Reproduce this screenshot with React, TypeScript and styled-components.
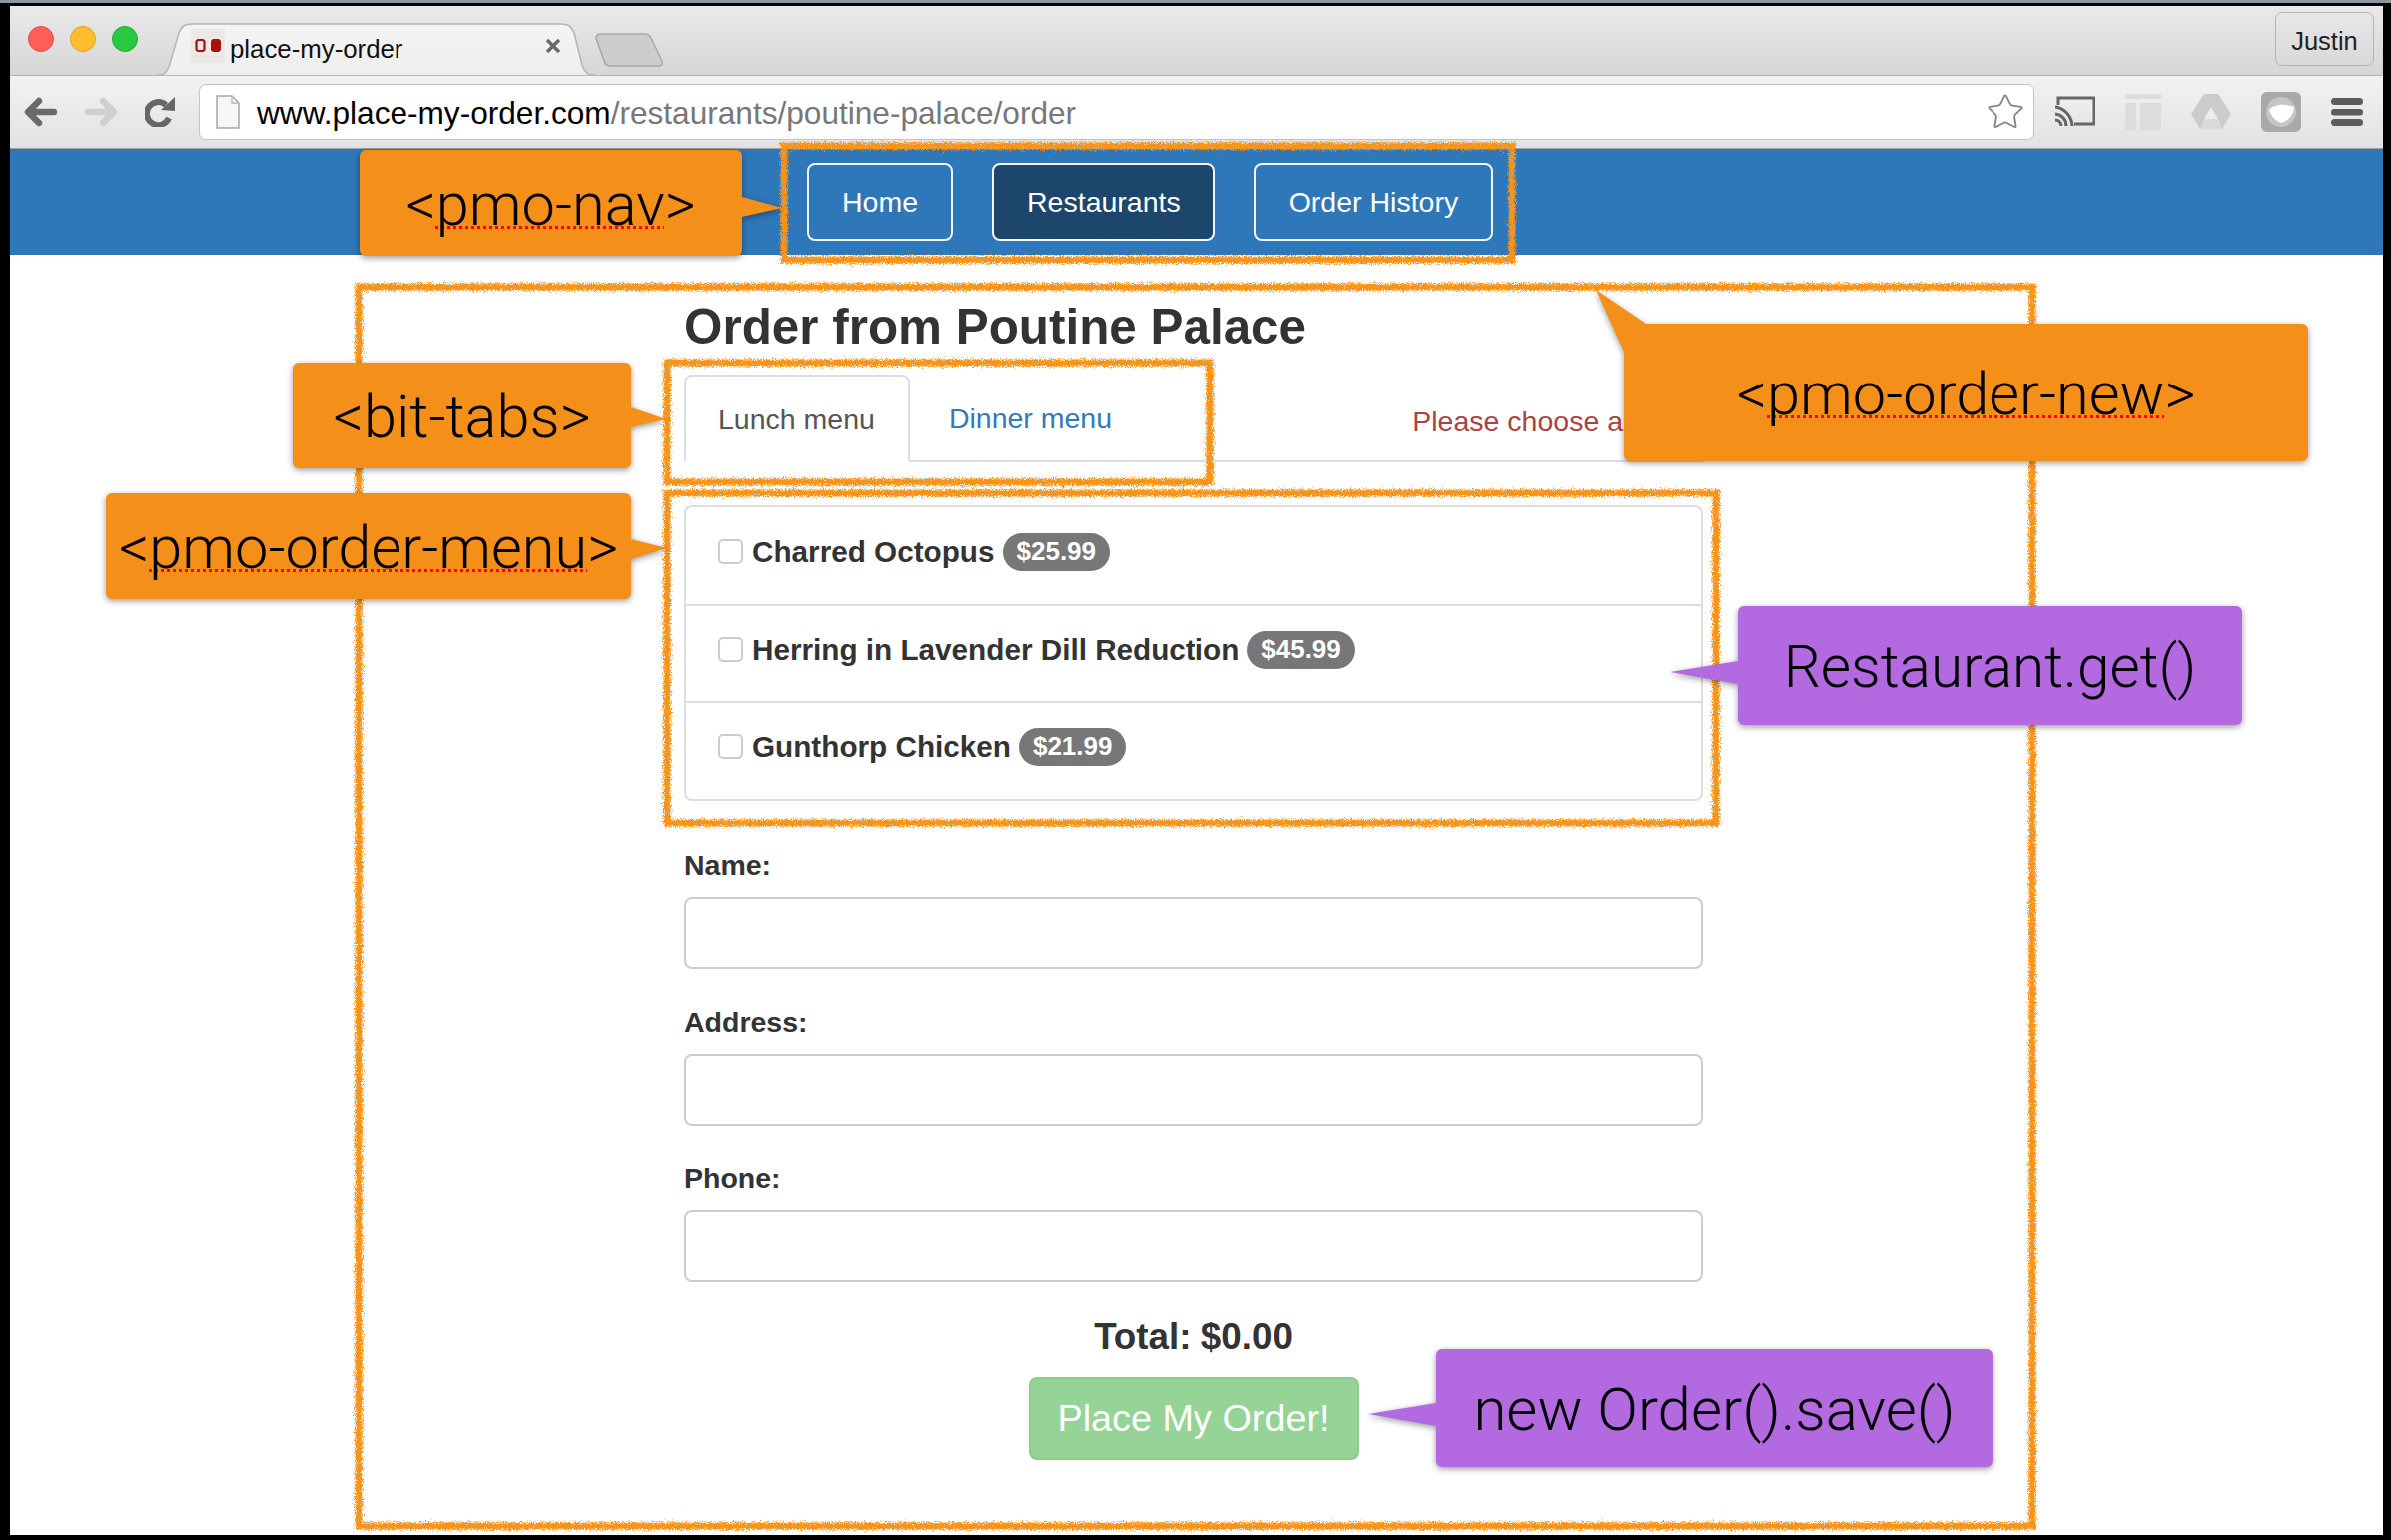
import React from 'react';
import styled, { createGlobalStyle } from 'styled-components';
import { Star } from 'lucide-react';

const Global = createGlobalStyle`
  html, body { margin: 0; padding: 0; background: #000; overflow: hidden; }
  * { box-sizing: border-box; }
`;

const sans = `"Liberation Sans", Arial, sans-serif`;

const Screen = styled.div`
  position: relative;
  width: 2394px;
  height: 1542px;
  background: #000;
  border-top: 3px solid #8d969e;
  padding: 3px 8px 5px 10px;
  font-family: ${sans};
  overflow: hidden;
`;
const Browser = styled.div`
  display: flex;
  flex-direction: column;
  height: 100%;
  background: #fff;
`;
const TabStrip = styled.div`
  position: relative;
  display: flex;
  align-items: flex-end;
  height: 70px;
  padding: 0 9px 0 18px;
  background: linear-gradient(#e9e9e9, #d6d6d6);
  border-bottom: 1px solid #b4b4b4;
`;
const Lights = styled.div`
  display: flex;
  gap: 16px;
  align-self: flex-start;
  margin-top: 20px;
`;
const Light = styled.span<{ $c: string; $b: string }>`
  width: 26px;
  height: 26px;
  border-radius: 50%;
  background: ${p => p.$c};
  border: 1px solid ${p => p.$b};
`;
const Tab = styled.div`
  position: relative;
  display: flex;
  align-items: center;
  width: 439px;
  height: 53px;
  margin: 0 0 -1px 19px;
  padding: 0 34px 7px 34px;
`;
const TabShape = styled.svg`
  position: absolute;
  left: 0;
  top: 0;
`;
const Favicon = styled.svg`
  position: relative;
  flex: none;
  background: #ece8e6;
  margin-right: 5px;
`;
const TabTitle = styled.span`
  position: relative;
  top: 3px;
  font-size: 25.8px;
  color: #111;
`;
const TabClose = styled.svg`
  position: relative;
  margin-left: auto;
`;
const NewTab = styled.svg`
  align-self: flex-start;
  margin: 27px 0 0 0;
`;
const Profile = styled.div`
  margin: 6px 0 0 auto;
  align-self: flex-start;
  width: 99px;
  height: 54px;
  padding-top: 4px;
  border: 1px solid #b5b5b5;
  border-radius: 7px;
  display: flex;
  align-items: center;
  justify-content: center;
  font-size: 25.5px;
  color: #222;
`;
const Toolbar = styled.div`
  display: flex;
  align-items: center;
  height: 73px;
  padding: 0 20px 0 14px;
  background: linear-gradient(#f2f2f2, #e2e2e2);
  border-bottom: 1px solid #a0a4a8;
`;
const HistoryGroup = styled.div`
  display: flex;
  align-items: center;
  width: 151px;
  justify-content: space-between;
`;
const AddressBar = styled.div`
  flex: 1;
  display: flex;
  align-items: center;
  height: 56px;
  margin: 0 21px 0 24px;
  padding: 0 8px 0 16px;
  background: #fff;
  border: 1px solid #c4c4c4;
  border-radius: 7px;
`;
const Url = styled.div`
  margin-left: 17px;
  padding-top: 2px;
  font-size: 31.6px;
  color: #777;
  white-space: nowrap;
`;
const UrlHost = styled.span`
  color: #000;
`;
const StarSlot = styled.div`
  margin-left: auto;
  display: flex;
  color: #858585;
`;
const Extensions = styled.div`
  display: flex;
  align-items: center;
  gap: 30px;
`;
const Navbar = styled.nav`
  display: flex;
  align-items: center;
  gap: 39px;
  height: 106px;
  padding-left: 798px;
  background: #2e77b8;
`;
const NavButton = styled.a<{ $active?: boolean }>`
  display: flex;
  align-items: center;
  height: 78px;
  padding: 0 33px;
  border: 2px solid #f2f6fa;
  border-radius: 8px;
  font-size: 28.5px;
  color: #fff;
  background: ${p => (p.$active ? '#1c466b' : 'transparent')};
`;
const Main = styled.main`
  flex: 1;
  width: 1020px;
  margin-left: 675px;
  padding-top: 45px;
  color: #333;
`;
const Heading = styled.h1`
  margin: 0;
  height: 54px;
  line-height: 54px;
  font-size: 49.4px;
  font-weight: 700;
`;
const Tabs = styled.div`
  display: flex;
  align-items: stretch;
  height: 88px;
  margin-top: 21px;
  border-bottom: 2px solid #ddd;
  font-size: 28.5px;
`;
const MenuTab = styled.div<{ $active?: boolean }>`
  display: flex;
  align-items: center;
  padding: 3px 33px 0 32px;
  margin-bottom: ${p => (p.$active ? '-2px' : '0')};
  margin-right: 5px;
  border: 2px solid ${p => (p.$active ? '#ddd' : 'transparent')};
  border-bottom-color: ${p => (p.$active ? '#fff' : 'transparent')};
  border-radius: 8px 8px 0 0;
  color: ${p => (p.$active ? '#555' : '#337ab7')};
`;
const Hint = styled.div`
  margin-left: auto;
  margin-right: 80px;
  align-self: center;
  padding-top: 8px;
  color: #a94442;
`;
const MenuPanel = styled.div`
  margin: 43px 0 44px;
  height: 296px;
  border: 2px solid #ddd;
  border-radius: 8px;
`;
const MenuRow = styled.div`
  display: flex;
  align-items: center;
  height: 97px;
  padding: 0 0 8px 32px;
  & + & {
    border-top: 2px solid #ddd;
  }
`;
const Check = styled.span`
  flex: none;
  width: 25px;
  height: 25px;
  margin-right: 9px;
  border: 2px solid #ccc;
  border-radius: 5px;
  background: #fff;
`;
const ItemName = styled.span`
  font-size: 29.7px;
  font-weight: 700;
  white-space: nowrap;
`;
const Price = styled.span`
  display: flex;
  align-items: center;
  height: 38px;
  margin-left: 8px;
  padding: 0 14px;
  border-radius: 19px;
  background: #777;
  color: #fff;
  font-size: 26px;
  font-weight: 700;
`;
const Field = styled.div`
  display: flex;
  flex-direction: column;
  margin-bottom: 33px;
`;
const FieldLabel = styled.label`
  height: 40px;
  line-height: 40px;
  margin-bottom: 12px;
  font-size: 28.5px;
  font-weight: 700;
`;
const FieldInput = styled.div`
  height: 72px;
  border: 2px solid #ccc;
  border-radius: 8px;
  background: #fff;
`;
const Checkout = styled.div`
  display: flex;
  flex-direction: column;
  align-items: center;
  padding-top: 3px;
`;
const Total = styled.div`
  height: 38px;
  line-height: 38px;
  font-size: 36.8px;
  font-weight: 700;
`;
const PlaceOrder = styled.div`
  display: flex;
  align-items: center;
  justify-content: center;
  width: 331px;
  height: 83px;
  margin-top: 21px;
  border: 2px solid #8ccc8c;
  border-radius: 8px;
  background: #95d396;
  color: #fff;
  font-size: 37.8px;
`;
const Sketch = styled.svg`
  position: absolute;
  left: 0;
  top: -3px;
  pointer-events: none;
`;
const Callout = styled.div<{ $x: number; $y: number; $w: number; $h: number; $tone: 'orange' | 'purple'; $size: number }>`
  position: absolute;
  left: ${p => p.$x}px;
  top: ${p => p.$y - 3}px;
  width: ${p => p.$w}px;
  height: ${p => p.$h}px;
  padding-top: 3px;
  display: flex;
  align-items: center;
  justify-content: center;
  border-radius: 6px;
  color: ${p => (p.$tone === 'orange' ? '#f48f1a' : '#b369e0')};
  background: currentColor;
  filter: drop-shadow(0 2px 3px rgba(0, 0, 0, 0.4));
  font-family: Roboto, "Liberation Sans", sans-serif;
  font-weight: 300;
  font-size: ${p => p.$size}px;
  white-space: nowrap;
`;
const CalloutText = styled.span`
  position: relative;
  color: #000;
`;
const Squiggle = styled.span`
  text-decoration: underline dotted #f00 3px;
  text-underline-offset: 1px;
  text-decoration-skip-ink: none;
`;
const Pointer = styled.svg`
  position: absolute;
  left: 0;
  top: 0;
  width: 100%;
  height: 100%;
  overflow: visible;
`;

const boxes = [
  { x: 785, y: 146, w: 729, h: 114 },
  { x: 359, y: 287, w: 1676, h: 1241 },
  { x: 668, y: 363, w: 544, h: 120 },
  { x: 668, y: 494, w: 1050, h: 330 },
];

const callouts = [
  { x: 360, y: 150, w: 383, h: 106, tone: 'orange', size: 59.5, pre: '<', mark: 'pmo-nav', post: '>', points: '383,47 423,58 383,67' },
  { x: 293, y: 363, w: 339, h: 106, tone: 'orange', size: 59.5, pre: '<bit-tabs>', mark: '', post: '', points: '339,45 374,57 339,65' },
  { x: 106, y: 494, w: 526, h: 106, tone: 'orange', size: 59.5, pre: '<', mark: 'pmo-order-menu', post: '>', points: '526,46 562,55 526,66' },
  { x: 1626, y: 324, w: 685, h: 138, tone: 'orange', size: 59.5, pre: '<', mark: 'pmo-order-new', post: '>', points: '-28,-34 22,0 0,28' },
  { x: 1740, y: 607, w: 505, h: 119, tone: 'purple', size: 58.5, pre: 'Restaurant.get()', mark: '', post: '', points: '-68,66 0,55 0,78' },
  { x: 1438, y: 1351, w: 557, h: 118, tone: 'purple', size: 60, pre: 'new Order().save()', mark: '', post: '', points: '-68,65 0,54 0,77' },
] as const;

const menu = [
  ['Charred Octopus', '$25.99'],
  ['Herring in Lavender Dill Reduction', '$45.99'],
  ['Gunthorp Chicken', '$21.99'],
];

export default function App() {
  return (
    <Screen>
      <Global />
      <Browser>
        <TabStrip>
          <Lights>
            <Light $c="#ff5f57" $b="#e5483f" />
            <Light $c="#ffbd2e" $b="#e1a116" />
            <Light $c="#28c840" $b="#1dad2b" />
          </Lights>
          <Tab>
            <TabShape width="439" height="53" viewBox="0 0 439 53">
              <defs>
                <linearGradient id="tabFill" x1="0" y1="0" x2="0" y2="1">
                  <stop offset="0" stopColor="#f4f4f4" />
                  <stop offset="1" stopColor="#eeeeee" />
                </linearGradient>
              </defs>
              <path d="M0 52 C8 52 9 50 12 44 L22 10 C25 3 28 1 36 1 L404 1 C412 1 415 3 418 10 L426 42 C429 50 431 52 439 52 Z" fill="url(#tabFill)" />
              <path d="M0 52 C8 52 9 50 12 44 L22 10 C25 3 28 1 36 1 L404 1 C412 1 415 3 418 10 L426 42 C429 50 431 52 439 52" fill="none" stroke="#b4b4b4" strokeWidth="1.5" />
            </TabShape>
            <Favicon width="34" height="34" viewBox="0 0 34 34">
              <path d="M7 11 H12 L13.500 12.500 V20.500 L12 22 H7 L5.500 20.500 V12.500 Z" fill="none" stroke="#a80f0f" strokeWidth="2.2" />
              <path d="M22 10 H28 L30 12 V21 L28 23 H22 L20 21 V12 Z" fill="#a80f0f" />
            </Favicon>
            <TabTitle>place-my-order</TabTitle>
            <TabClose width="16" height="14" viewBox="0 0 16 14">
              <path d="M2 1 L14 13 M14 1 L2 13" stroke="#6a6a6a" strokeWidth="3.500" />
            </TabClose>
          </Tab>
          <NewTab width="69" height="34" viewBox="0 0 69 34">
            <path d="M1 5 C1 2 3 1 6 1 H50 C54 1 55 3 57 7 L67 28 C68 31 67 33 64 33 H16 C12 33 10 32 9 28 Z" fill="#cdcdcd" stroke="#a8a8a8" strokeWidth="1.500" />
          </NewTab>
          <Profile>Justin</Profile>
        </TabStrip>
        <Toolbar>
          <HistoryGroup>
            <svg width="33" height="30" viewBox="0 0 33 30">
              <path d="M5 15 H30 M15 4 L4 15 L15 26" fill="none" stroke="#6a6a6a" strokeWidth="6.500" strokeLinecap="round" strokeLinejoin="round" />
            </svg>
            <svg width="33" height="30" viewBox="0 0 33 30">
              <path d="M3 15 H28 M18 4 L29 15 L18 26" fill="none" stroke="#cfcfcf" strokeWidth="6.500" strokeLinecap="round" strokeLinejoin="round" />
            </svg>
            <svg width="30" height="30" viewBox="0 0 30 30">
              <path d="M24 21 A11.500 11.500 0 1 1 21 8" fill="none" stroke="#666" strokeWidth="6" />
              <path d="M16 13 L30 14 V0 Z" fill="#666" />
            </svg>
          </HistoryGroup>
          <AddressBar>
            <svg width="24" height="34" viewBox="0 0 24 34">
              <path d="M1 1 H16 L23 8 V33 H1 Z" fill="#f7f7f7" stroke="#a8a8a8" strokeWidth="1.500" />
              <path d="M16 1 V8 H23" fill="none" stroke="#bbb" strokeWidth="1.500" />
            </svg>
            <Url>
              <UrlHost>www.place-my-order.com</UrlHost>/restaurants/poutine-palace/order
            </Url>
            <StarSlot>
              <Star size={40} strokeWidth={1.1} />
            </StarSlot>
          </AddressBar>
          <Extensions>
            <svg width="40" height="32" viewBox="0 0 40 32">
              <path d="M3 9 V2 H39 V28 H19" fill="none" stroke="#666" strokeWidth="3" />
              <path d="M0 11 A20 20 0 0 1 17 30 M0 18 A12 12 0 0 1 11 30 M0 24 A6 6 0 0 1 6 30" fill="none" stroke="#666" strokeWidth="3" />
            </svg>
            <svg width="36" height="36" viewBox="0 0 36 36">
              <path d="M0 0 H36 V5 H0 Z M0 9 H11 V36 H0 Z M15 9 H36 V36 H15 Z" fill="#dcdcdc" />
            </svg>
            <svg width="40" height="36" viewBox="0 0 40 36">
              <path d="M13 0 H27 L40 20 L31 35 H9 L0 20 Z" fill="#cbcbcb" />
              <path d="M20 13 L27 25 H13 Z" fill="#ececec" />
              <path d="M9 35 H31 L27 25 H13 Z" fill="#dadada" />
            </svg>
            <svg width="40" height="40" viewBox="0 0 40 40">
              <rect width="40" height="40" rx="6" fill="#a9a9a9" />
              <circle cx="20" cy="20" r="15" fill="#c5c5c5" />
              <path d="M8 18 C14 11 26 12 33 15 C33 23 27 29 20 31 C14 29 10 24 8 18 Z" fill="#fff" />
            </svg>
            <svg width="32" height="28" viewBox="0 0 32 28">
              <rect y="0" width="32" height="7" rx="3.500" fill="#5c5c5c" />
              <rect y="11" width="32" height="6.500" rx="3.250" fill="#5c5c5c" />
              <rect y="21" width="32" height="7" rx="3.500" fill="#5c5c5c" />
            </svg>
          </Extensions>
        </Toolbar>
        <Navbar>
          <NavButton>Home</NavButton>
          <NavButton $active>Restaurants</NavButton>
          <NavButton>Order History</NavButton>
        </Navbar>
        <Main>
          <Heading>Order from Poutine Palace</Heading>
          <Tabs>
            <MenuTab $active>Lunch menu</MenuTab>
            <MenuTab>Dinner menu</MenuTab>
            <Hint>Please choose a</Hint>
          </Tabs>
          <MenuPanel>
            {menu.map(([name, price]) => (
              <MenuRow key={name}>
                <Check />
                <ItemName>{name}</ItemName>
                <Price>{price}</Price>
              </MenuRow>
            ))}
          </MenuPanel>
          {['Name:', 'Address:', 'Phone:'].map(label => (
            <Field key={label}>
              <FieldLabel>{label}</FieldLabel>
              <FieldInput />
            </Field>
          ))}
          <Checkout>
            <Total>Total: $0.00</Total>
            <PlaceOrder>Place My Order!</PlaceOrder>
          </Checkout>
        </Main>
      </Browser>
      <Sketch width="2394" height="1542" viewBox="0 0 2394 1542">
        <defs>
          <filter id="rough" x="-2%" y="-2%" width="104%" height="104%">
            <feTurbulence type="fractalNoise" baseFrequency="1.1" numOctaves="2" seed="4" />
            <feDisplacementMap in="SourceGraphic" scale="9" xChannelSelector="R" yChannelSelector="G" />
          </filter>
        </defs>
        <g filter="url(#rough)" fill="none" stroke="#f7941d" strokeWidth="7">
          {boxes.map(b => (
            <rect key={b.x + '-' + b.y} x={b.x} y={b.y} width={b.w} height={b.h} />
          ))}
        </g>
      </Sketch>
      {callouts.map(c => (
        <Callout key={c.x} $x={c.x} $y={c.y} $w={c.w} $h={c.h} $tone={c.tone} $size={c.size}>
          <Pointer viewBox={`0 0 ${c.w} ${c.h}`}>
            <polygon points={c.points} fill="currentColor" />
          </Pointer>
          <CalloutText>
            {c.pre}
            {c.mark && <Squiggle>{c.mark}</Squiggle>}
            {c.post}
          </CalloutText>
        </Callout>
      ))}
    </Screen>
  );
}
